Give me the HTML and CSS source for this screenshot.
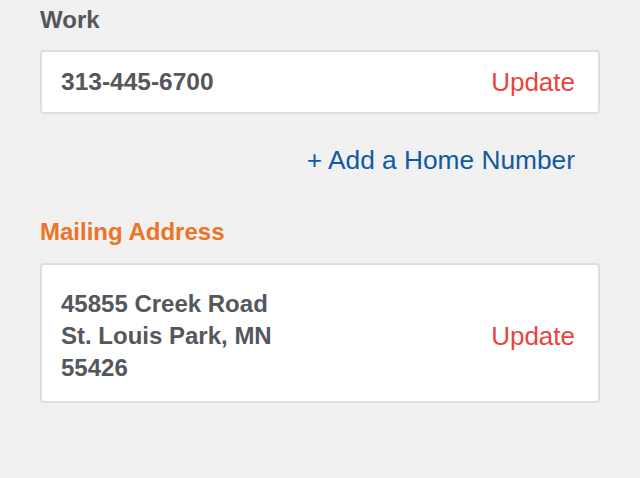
FILE: index.html
```html
<!DOCTYPE html>
<html>
<head>
<meta charset="utf-8">
<link rel="stylesheet" href="styles.css">
</head>
<body>
<div class="page">
  <div class="label">Work</div>
  <div class="card phone-card">
    <span class="value">313-445-6700</span>
    <a class="update">Update</a>
  </div>
  <div class="add-row">
    <a class="add-link">+ Add a Home Number</a>
  </div>
  <div class="label label-orange">Mailing Address</div>
  <div class="card address-card">
    <div class="value address">45855 Creek Road<br>St. Louis Park, MN<br>55426</div>
    <a class="update">Update</a>
  </div>
</div>
</body>
</html>
```
FILE: styles.css
```css
html, body {
  margin: 0;
  padding: 0;
  background: #f1f1f1;
}
body {
  font-family: "Liberation Sans", Arial, Helvetica, sans-serif;
  color: #54575b;
}
.page {
  width: 560px;
  padding: 5px 40px 0 40px;
}
.label {
  font-size: 24px;
  font-weight: bold;
  line-height: 30px;
  color: #54575b;
}
.label-orange {
  color: #ec7426;
}
.card {
  background: #ffffff;
  border: 2px solid #dedede;
  border-radius: 4px;
  display: flex;
  align-items: center;
  justify-content: space-between;
  padding: 0 23px 0 19px;
}
.phone-card {
  margin-top: 15px;
  height: 60px;
}
.value {
  font-size: 24.5px;
  font-weight: bold;
  color: #54575b;
}
.update {
  font-size: 26px;
  color: #e8453c;
}
.add-row {
  display: flex;
  justify-content: flex-end;
  padding-right: 25px;
  margin-top: 31px;
  line-height: 30px;
}
.add-link {
  font-size: 26.3px;
  color: #0f5aa5;
}
.add-row + .label {
  margin-top: 42px;
}
.address-card {
  margin-top: 16px;
  padding-top: 23px;
  padding-bottom: 17px;
}
.address {
  font-size: 24px;
  line-height: 32px;
}
```
